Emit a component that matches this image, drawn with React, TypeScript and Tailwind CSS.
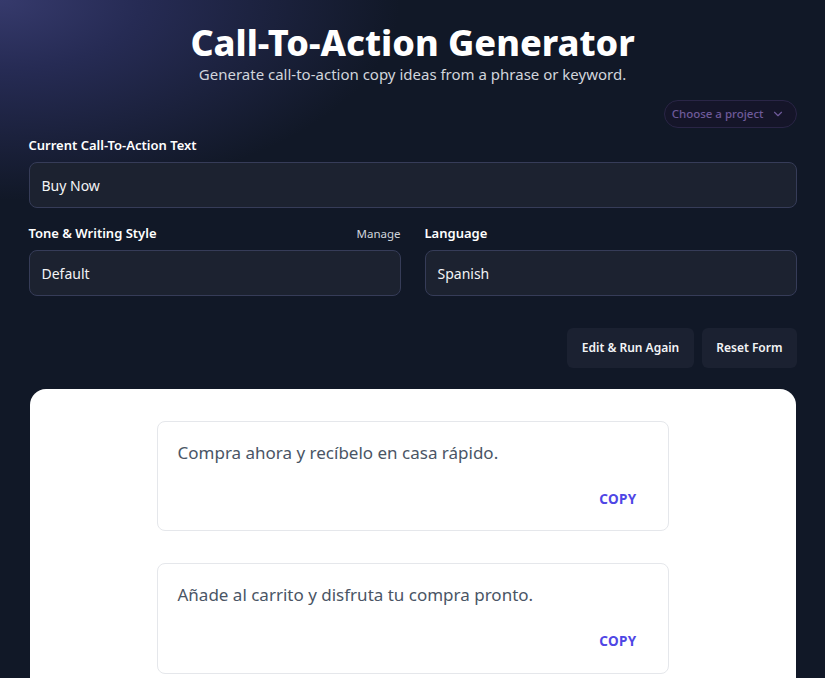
import { ChevronDown } from "lucide-react";

const results = [
  "Compra ahora y recíbelo en casa rápido.",
  "Añade al carrito y disfruta tu compra pronto.",
  "Consíguelo hoy con envío inmediato.",
];

const ResultCard = ({ text }: { text: string }) => {
  return (
    <div className="w-full rounded-lg border border-gray-200 bg-white px-5 pt-[17px] pb-[21px]">
      <p className="text-[17px] leading-7 text-gray-600">{text}</p>
      <div className="mt-[22px] flex justify-end pr-[11px]">
        <button className="text-[13.5px] font-bold tracking-wide text-[#4f46e5]">COPY</button>
      </div>
    </div>
  );
};

const App = () => {
  return (
    <div className="min-h-screen bg-[#111827] bg-[radial-gradient(ellipse_400px_200px_at_0%_0%,#363a6c_0%,#262b54_35%,#111827_100%)] font-['Noto_Sans','Open_Sans',sans-serif] text-white">
      <div className="mx-auto max-w-3xl pt-[23px]">
        <div className="flex flex-col items-center">
          <h1 className="text-[36px] leading-[40px] font-extrabold text-white">Call-To-Action Generator</h1>
          <p className="text-[15px] leading-[22px] text-gray-300">
            Generate call-to-action copy ideas from a phrase or keyword.
          </p>
        </div>

        <div className="mt-[15px] flex justify-end">
          <button className="flex h-[28px] items-center gap-[7px] rounded-full border border-[#2a2546] bg-[#151529] pr-[11px] pl-[7px] text-[11.5px] font-medium text-[#6e5a9a]">
            Choose a project
            <ChevronDown className="h-3.5 w-3.5" strokeWidth={2} />
          </button>
        </div>

        <div className="mt-[8px]">
          <div className="flex h-[20px] items-center">
            <label className="text-[13px] font-semibold text-white">Current Call-To-Action Text</label>
          </div>
          <div className="mt-[6px] flex h-[46px] items-center rounded-lg border border-[#363c58] bg-[#1c2230] px-3 text-[14px] text-gray-100">
            Buy Now
          </div>
        </div>

        <div className="mt-[16px] grid grid-cols-2 gap-6">
          <div>
            <div className="flex h-[20px] items-center justify-between">
              <label className="text-[13px] font-semibold text-white">Tone &amp; Writing Style</label>
              <span className="text-[11.5px] text-gray-300">Manage</span>
            </div>
            <div className="mt-[6px] flex h-[46px] items-center rounded-lg border border-[#363c58] bg-[#1c2230] px-3 text-[14px] text-gray-100">
              Default
            </div>
          </div>
          <div>
            <div className="flex h-[20px] items-center">
              <label className="text-[13px] font-semibold text-white">Language</label>
            </div>
            <div className="mt-[6px] flex h-[46px] items-center rounded-lg border border-[#363c58] bg-[#1c2230] px-3 text-[14px] text-gray-100">
              Spanish
            </div>
          </div>
        </div>

        <div className="mt-[32px] flex justify-end gap-2">
          <button className="h-10 rounded-md bg-[#1b2131] px-[15px] text-[12px] font-semibold text-gray-100">
            Edit &amp; Run Again
          </button>
          <button className="h-10 rounded-md bg-[#1b2131] px-[14px] text-[12px] font-semibold text-gray-100">
            Reset Form
          </button>
        </div>

        <div className="mx-px mt-[21px] rounded-t-2xl bg-white px-4 pt-8 pb-8">
          <div className="mx-auto flex max-w-lg flex-col gap-8">
            {results.map((r) => (
              <ResultCard key={r} text={r} />
            ))}
          </div>
        </div>
      </div>
    </div>
  );
};

export default App;
